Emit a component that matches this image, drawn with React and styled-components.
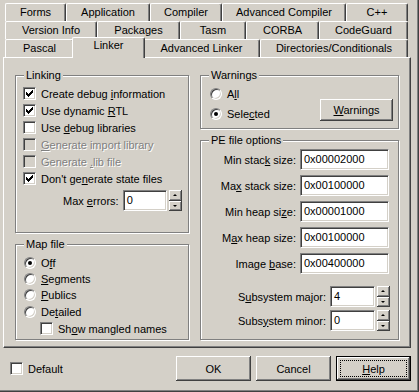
import React from 'react';
import styled, { createGlobalStyle, css } from 'styled-components';

const FACE = '#d4d0c8';
const HI = '#ffffff';
const SH = '#808080';
const DK = '#404040';

const Global = createGlobalStyle`
  html, body { margin: 0; padding: 0; background: ${FACE}; }
  body { font-family: "Liberation Sans", Arial, sans-serif; font-size: 11px; color: #000; }
  * { box-sizing: border-box; }
`;

const Dialog = styled.div`
  width: 419px;
  height: 392px;
  background: ${FACE};
  box-shadow: inset -1px -1px ${DK}, inset -2px -2px ${SH};
  padding: 3px 0 0 3px;
  display: flex;
  flex-direction: column;
  overflow: hidden;
`;

const TabStrip = styled.div`
  display: flex;
  flex-direction: column;
  margin-left: 2px;
`;

const TabRow = styled.div`
  display: flex;
  height: 18px;
`;

const Tab = styled.div`
  flex: none;
  width: ${(p) => p.$w}px;
  height: 18px;
  background: ${FACE};
  border-top: 1px solid ${HI};
  border-left: 1px solid ${HI};
  border-right: 1px solid ${DK};
  border-radius: 2px 2px 0 0;
  box-shadow: inset -1px 0 ${SH};
  display: flex;
  justify-content: center;
  padding-top: 2px;
  line-height: 13px;
  white-space: nowrap;
  ${(p) =>
    p.$active &&
    css`
      width: ${p.$w + 4}px;
      height: 21px;
      margin: -2px -2px -1px -2px;
      padding-top: 1px;
      position: relative;
      z-index: 1;
    `}
`;

const Panel = styled.div`
  flex: none;
  width: 408px;
  height: 291px;
  border-top: 1px solid ${HI};
  border-left: 1px solid ${HI};
  border-right: 1px solid ${DK};
  border-bottom: 1px solid ${DK};
  box-shadow: inset -1px -1px ${SH};
  display: grid;
  grid-template-columns: 174px 199px;
  column-gap: 11px;
  align-items: start;
  padding: 17px 0 0 11px;
`;

const Column = styled.div`
  display: flex;
  flex-direction: column;
  gap: 11px;
`;

const Group = styled.div`
  height: ${(p) => p.$h}px;
  border: 1px solid ${SH};
  box-shadow: inset 1px 1px ${HI}, 1px 1px ${HI};
  display: flex;
  flex-direction: column;
`;

const Caption = styled.div`
  align-self: flex-start;
  margin: -7px 0 0 8px;
  padding: 0 2px;
  line-height: 13px;
  height: 13px;
  background: ${FACE};
  white-space: nowrap;
`;

const GroupBody = styled.div`
  display: flex;
  flex-direction: ${(p) => (p.$row ? 'row' : 'column')};
  padding-top: ${(p) => p.$pt}px;
`;

const CheckRow = styled.label`
  display: flex;
  align-items: center;
  height: ${(p) => p.$h || 17}px;
  padding-left: ${(p) => p.$pl}px;
  gap: 5px;
  white-space: nowrap;
  color: ${(p) => (p.$disabled ? SH : '#000')};
  text-shadow: ${(p) => (p.$disabled ? `1px 1px 0 ${HI}` : 'none')};
`;

const Box = styled.span`
  flex: none;
  width: 13px;
  height: 13px;
  background: ${(p) => (p.$disabled ? FACE : HI)};
  border: 1px solid;
  border-color: ${SH} ${HI} ${HI} ${SH};
  box-shadow: inset 1px 1px ${DK}, inset -1px -1px ${FACE};
  display: flex;
  align-items: center;
  justify-content: center;
`;

const RadioCircle = styled.span`
  flex: none;
  width: 12px;
  height: 12px;
  border-radius: 50%;
  background: ${HI};
  border: 1px solid;
  border-color: ${SH} ${HI} ${HI} ${SH};
  box-shadow: inset 1px 1px ${DK}, inset -1px -1px ${FACE};
  display: flex;
  align-items: center;
  justify-content: center;
  &::after {
    content: '';
    display: ${(p) => (p.$on ? 'block' : 'none')};
    width: 4px;
    height: 4px;
    border-radius: 50%;
    background: #000;
  }
`;

const Key = styled.span`
  text-decoration: underline;
  text-underline-offset: 1px;
`;

const FieldRow = styled.div`
  display: flex;
  align-items: center;
  justify-content: ${(p) => (p.$start ? 'flex-start' : 'flex-end')};
  height: 21px;
  margin-top: ${(p) => p.$mt || 0}px;
  padding-left: ${(p) => p.$pl || 0}px;
  padding-right: ${(p) => p.$pr || 0}px;
  white-space: nowrap;
`;

const FieldLabel = styled.span`
  margin-right: 4px;
`;

const Edit = styled.div`
  flex: none;
  width: ${(p) => p.$w}px;
  height: 21px;
  background: ${HI};
  border: 1px solid;
  border-color: ${SH} ${HI} ${HI} ${SH};
  box-shadow: inset 1px 1px ${DK}, inset -1px -1px ${FACE};
  padding: 3px 2px 0 3px;
  line-height: 13px;
`;

const Spin = styled.div`
  flex: none;
  width: 13px;
  height: 21px;
  margin-left: 2px;
  display: flex;
  flex-direction: column;
`;

const SpinBtn = styled.div`
  flex: 1;
  background: ${FACE};
  box-shadow: inset -1px -1px ${DK}, inset 1px 1px ${HI}, inset -2px -2px ${SH};
  display: flex;
  align-items: center;
  justify-content: center;
  &::after {
    content: '';
    width: 0;
    height: 0;
    border-left: 2px solid transparent;
    border-right: 2px solid transparent;
    ${(p) =>
      p.$up
        ? css`border-bottom: 2px solid #000;`
        : css`border-top: 2px solid #000;`}
    margin-right: 1px;
  }
`;

const Button = styled.button`
  flex: none;
  width: ${(p) => p.$w}px;
  height: ${(p) => p.$h}px;
  margin: ${(p) => p.$m || '0'};
  font: inherit;
  color: #000;
  background: ${FACE};
  border: none;
  padding: 0;
  display: flex;
  align-items: center;
  justify-content: center;
  box-shadow: inset -1px -1px ${DK}, inset 1px 1px ${HI}, inset -2px -2px ${SH};
  ${(p) =>
    p.$default &&
    css`
      padding: 4px;
      box-shadow: inset 0 0 0 1px #000, inset -2px -2px ${DK}, inset 2px 2px ${HI},
        inset -3px -3px ${SH};
    `}
`;

const FocusRect = styled.span`
  flex: 1;
  align-self: stretch;
  border: 1px dotted #000;
  display: flex;
  align-items: center;
  justify-content: center;
`;

const Footer = styled.div`
  display: flex;
  align-items: center;
  width: 408px;
  height: 25px;
  margin-top: 8px;
  padding-left: 7px;
`;

const Buttons = styled.div`
  margin-left: auto;
  display: flex;
  gap: 5px;
`;

const Check = () => (
  <svg width="7" height="7" viewBox="0 0 7 7" shapeRendering="crispEdges">
    {[2, 3, 4, 3, 2, 1, 0].map((y, x) => (
      <rect key={x} x={x} y={y} width="1" height="3" fill="#000" />
    ))}
  </svg>
);

const CheckBox = ({ checked, disabled, pl, h, children }) => (
  <CheckRow $pl={pl} $h={h} $disabled={disabled}>
    <Box $disabled={disabled}>{checked && <Check />}</Box>
    <span>{children}</span>
  </CheckRow>
);

const Radio = ({ on, pl, h, children }) => (
  <CheckRow $pl={pl} $h={h}>
    <RadioCircle $on={on} />
    <span>{children}</span>
  </CheckRow>
);

const SpinBox = () => (
  <Spin>
    <SpinBtn $up />
    <SpinBtn />
  </Spin>
);

const rows = [
  [
    ['Forms', 61],
    ['Application', 84],
    ['Compiler', 72],
    ['Advanced Compiler', 124],
    ['C++', 62],
  ],
  [
    ['Version Info', 92],
    ['Packages', 83],
    ['Tasm', 66],
    ['CORBA', 73],
    ['CodeGuard', 89],
  ],
  [
    ['Pascal', 69],
    ['Linker', 69, true],
    ['Advanced Linker', 117],
    ['Directories/Conditionals', 148],
  ],
];

const peFields = [
  [<>Min stac<Key>k</Key> size:</>, '0x00002000'],
  [<>Ma<Key>x</Key> stack size:</>, '0x00100000'],
  [<>Min heap si<Key>z</Key>e:</>, '0x00001000'],
  [<>M<Key>a</Key>x heap size:</>, '0x00100000'],
  [<>Image <Key>b</Key>ase:</>, '0x00400000'],
];

export default function App() {
  return (
    <>
      <Global />
      <Dialog>
        <TabStrip>
          {rows.map((r, i) => (
            <TabRow key={i}>
              {r.map(([t, w, a]) => (
                <Tab key={t} $w={w} $active={a}>
                  {t}
                </Tab>
              ))}
            </TabRow>
          ))}
        </TabStrip>
        <Panel>
          <Column>
            <Group $h={158}>
              <Caption>Linking</Caption>
              <GroupBody $pt={3}>
                <CheckBox checked pl={7}>
                  Create debug <Key>i</Key>nformation
                </CheckBox>
                <CheckBox checked pl={7}>
                  Use dynamic <Key>R</Key>TL
                </CheckBox>
                <CheckBox pl={7}>
                  Use <Key>d</Key>ebug libraries
                </CheckBox>
                <CheckBox disabled pl={7}>
                  <Key>G</Key>enerate import library
                </CheckBox>
                <CheckBox disabled pl={7}>
                  Generate <Key>.</Key>lib file
                </CheckBox>
                <CheckBox checked pl={7}>
                  Don't ge<Key>n</Key>erate state files
                </CheckBox>
                <FieldRow $start $mt={3} $pl={47}>
                  <FieldLabel>
                    Max <Key>e</Key>rrors:
                  </FieldLabel>
                  <Edit $w={44}>0</Edit>
                  <SpinBox />
                </FieldRow>
              </GroupBody>
            </Group>
            <Group $h={96}>
              <Caption>Map file</Caption>
              <GroupBody $pt={3}>
                <Radio on pl={8}>
                  O<Key>f</Key>f
                </Radio>
                <Radio pl={8} h={16}>
                  <Key>S</Key>egments
                </Radio>
                <Radio pl={8} h={16}>
                  <Key>P</Key>ublics
                </Radio>
                <Radio pl={8}>
                  De<Key>t</Key>ailed
                </Radio>
                <CheckBox pl={24}>
                  Sh<Key>o</Key>w mangled names
                </CheckBox>
              </GroupBody>
            </Group>
          </Column>
          <Column>
            <Group $h={54}>
              <Caption>Warnings</Caption>
              <GroupBody $row $pt={2}>
                <div>
                  <Radio pl={9} h={20}>
                    A<Key>l</Key>l
                  </Radio>
                  <Radio on pl={9} h={20}>
                    Sele<Key>c</Key>ted
                  </Radio>
                </div>
                <Button $w={73} $h={22} $m="15px 5px 0 auto">
                  <span>
                    <Key>W</Key>arnings
                  </span>
                </Button>
              </GroupBody>
            </Group>
            <Group $h={200}>
              <Caption>PE file options</Caption>
              <GroupBody $pt={2}>
                {peFields.map(([l, v], i) => (
                  <FieldRow key={i} $mt={i ? 5 : 0} $pr={9}>
                    <FieldLabel>{l}</FieldLabel>
                    <Edit $w={89}>{v}</Edit>
                  </FieldRow>
                ))}
                <FieldRow $mt={12} $pr={8}>
                  <FieldLabel>
                    S<Key>u</Key>bsystem major:
                  </FieldLabel>
                  <Edit $w={45}>4</Edit>
                  <SpinBox />
                </FieldRow>
                <FieldRow $mt={3} $pr={8}>
                  <FieldLabel>
                    Subs<Key>y</Key>stem minor:
                  </FieldLabel>
                  <Edit $w={45}>0</Edit>
                  <SpinBox />
                </FieldRow>
              </GroupBody>
            </Group>
          </Column>
        </Panel>
        <Footer>
          <CheckBox pl={0} h={25}>
            Default
          </CheckBox>
          <Buttons>
            <Button $w={75} $h={25}>
              OK
            </Button>
            <Button $w={75} $h={25}>
              Cancel
            </Button>
            <Button $w={75} $h={25} $default>
              <FocusRect>
                <span>
                  <Key>H</Key>elp
                </span>
              </FocusRect>
            </Button>
          </Buttons>
        </Footer>
      </Dialog>
    </>
  );
}
